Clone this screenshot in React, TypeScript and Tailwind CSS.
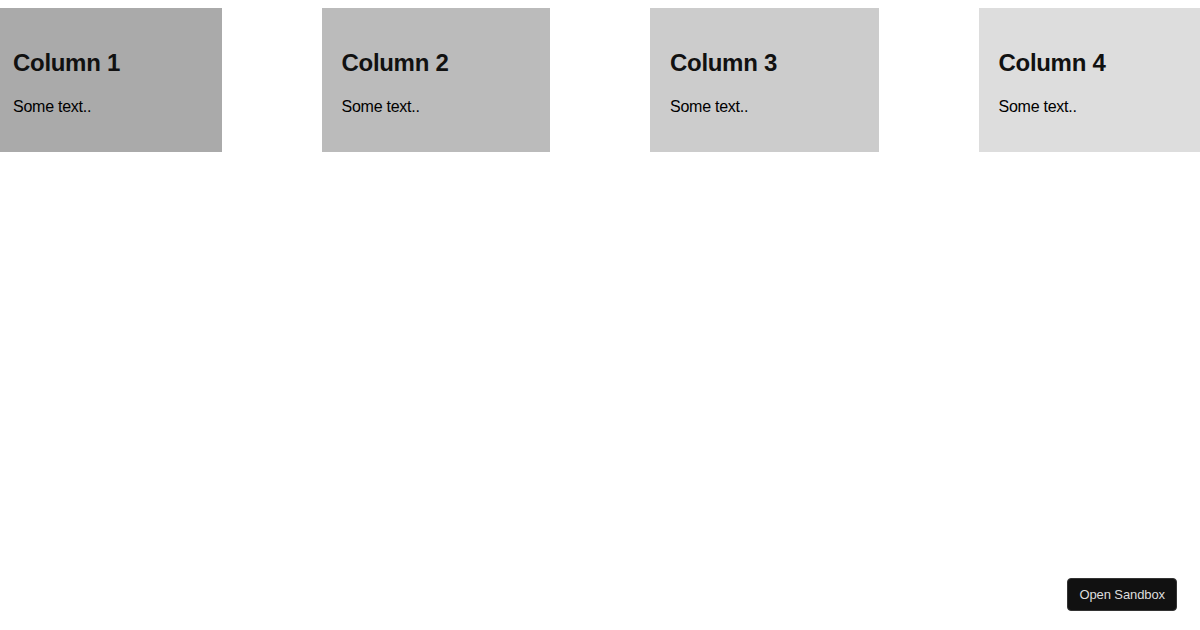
const columns = [
  { title: "Column 1", bg: "bg-[#aaaaaa]" },
  { title: "Column 2", bg: "bg-[#bbbbbb]" },
  { title: "Column 3", bg: "bg-[#cccccc]" },
  { title: "Column 4", bg: "bg-[#dddddd]" },
];

export default function App() {
  return (
    <div className="relative h-[630px] w-full overflow-hidden bg-white pt-2 font-['Liberation_Sans',Arial,sans-serif] text-black">
      <div className="-ml-[7px] flex w-[1214px] gap-[100px]">
        {columns.map((c) => (
          <div key={c.title} className={`w-[228.5px] shrink-0 px-5 pt-5 pb-5 ${c.bg}`}>
            <h2 className="mt-[21px] mb-5 text-[24px] leading-[1.2] font-bold tracking-[-0.3px] text-[#111]">
              {c.title}
            </h2>
            <p className="my-4 text-base leading-[1.15] tracking-[-0.25px]">Some text..</p>
          </div>
        ))}
      </div>

      <button className="absolute right-[23px] bottom-[19px] h-[33px] rounded-[4px] border border-[#333] bg-[#111] px-[11px] text-[13px] tracking-[-0.1px] text-[#dddddd]">
        Open Sandbox
      </button>
    </div>
  );
}
